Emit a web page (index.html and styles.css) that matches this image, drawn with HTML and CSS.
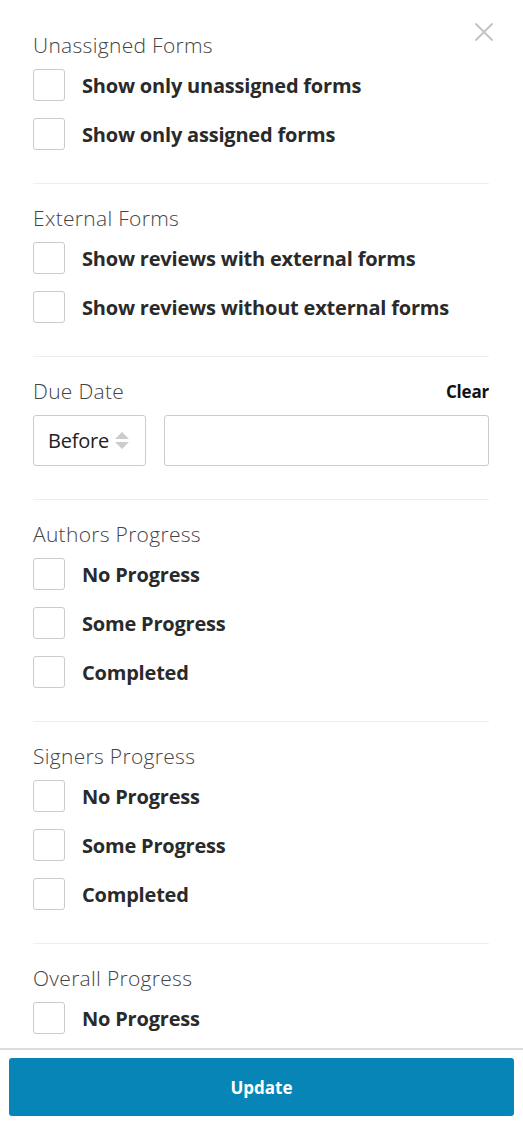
FILE: index.html
```html
<!DOCTYPE html>
<html>
<head>
<meta charset="utf-8">
<link rel="stylesheet" href="styles.css">
</head>
<body>
<div class="panel">
  <div class="scroll">
    <button class="close" aria-label="Close">
      <svg width="20" height="20" viewBox="0 0 20 20"><path d="M1.5 1.5 L18.5 18.5 M18.5 1.5 L1.5 18.5" stroke="#c4c4c4" stroke-width="2" fill="none"/></svg>
    </button>

    <section class="group">
      <h3 class="title">Unassigned Forms</h3>
      <div class="rows">
        <label class="row"><span class="box"></span><span class="lbl">Show only unassigned forms</span></label>
        <label class="row"><span class="box"></span><span class="lbl">Show only assigned forms</span></label>
      </div>
    </section>

    <section class="group">
      <h3 class="title">External Forms</h3>
      <div class="rows">
        <label class="row"><span class="box"></span><span class="lbl">Show reviews with external forms</span></label>
        <label class="row"><span class="box"></span><span class="lbl">Show reviews without external forms</span></label>
      </div>
    </section>

    <section class="group">
      <div class="title-line">
        <h3 class="title">Due Date</h3>
        <span class="clear">Clear</span>
      </div>
      <div class="date-row">
        <div class="select">
          <span>Before</span>
          <svg class="arrows" width="14" height="17" viewBox="0 0 14 17"><path d="M7 0 L14 7 L0 7 Z" fill="#cccccc"/><path d="M0 10 L14 10 L7 17 Z" fill="#cccccc"/></svg>
        </div>
        <div class="input"></div>
      </div>
    </section>

    <section class="group">
      <h3 class="title">Authors Progress</h3>
      <div class="rows">
        <label class="row"><span class="box"></span><span class="lbl">No Progress</span></label>
        <label class="row"><span class="box"></span><span class="lbl">Some Progress</span></label>
        <label class="row"><span class="box"></span><span class="lbl">Completed</span></label>
      </div>
    </section>

    <section class="group">
      <h3 class="title">Signers Progress</h3>
      <div class="rows">
        <label class="row"><span class="box"></span><span class="lbl">No Progress</span></label>
        <label class="row"><span class="box"></span><span class="lbl">Some Progress</span></label>
        <label class="row"><span class="box"></span><span class="lbl">Completed</span></label>
      </div>
    </section>

    <section class="group last">
      <h3 class="title">Overall Progress</h3>
      <div class="rows">
        <label class="row"><span class="box"></span><span class="lbl">No Progress</span></label>
      </div>
    </section>
  </div>
  <div class="footer">
    <button class="update">Update</button>
  </div>
</div>
</body>
</html>
```

FILE: styles.css
```css
* { box-sizing: border-box; }
html, body {
  margin: 0;
  padding: 0;
  background: #ffffff;
}
body {
  font-family: "Open Sans", Lato, "Liberation Sans", sans-serif;
  color: #333333;
}
.panel {
  width: 523px;
  height: 1125px;
  display: flex;
  flex-direction: column;
  overflow: hidden;
}
.scroll {
  flex: 1;
  overflow: hidden;
  position: relative;
  padding: 11px 34px 0 33px;
}
.close {
  position: absolute;
  top: 22px;
  right: 29px;
  width: 20px;
  height: 20px;
  padding: 0;
  border: none;
  background: none;
  display: block;
}
.close svg { display: block; }
.group {
  padding: 21px 0 33px 0;
  border-bottom: 1px solid #eeeeee;
}
.group.last {
  border-bottom: none;
  padding-bottom: 0;
}
.title {
  margin: 0;
  font-size: 21px;
  line-height: 26px;
  font-weight: 300;
  letter-spacing: 0.3px;
  color: #444444;
}
.title-line {
  display: flex;
  justify-content: space-between;
  align-items: center;
}
.clear {
  font-size: 17px;
  font-weight: 700;
  color: #111111;
  letter-spacing: -0.2px;
}
.rows {
  display: flex;
  flex-direction: column;
  gap: 17px;
  margin-top: 11px;
}
.row {
  display: flex;
  align-items: center;
  gap: 17px;
  height: 32px;
}
.box {
  width: 32px;
  height: 32px;
  border: 1px solid #cccccc;
  border-radius: 3px;
  flex: none;
}
.lbl {
  font-size: 20px;
  font-weight: 700;
  color: #2a2a2a;
  letter-spacing: -0.2px;
}
.date-row {
  display: flex;
  gap: 18px;
  margin-top: 11px;
}
.select {
  width: 113px;
  height: 51px;
  border: 1px solid #cccccc;
  border-radius: 3px;
  display: flex;
  align-items: center;
  padding-left: 14px;
  gap: 6px;
  font-size: 20px;
  letter-spacing: -0.2px;
  color: #222222;
}
.arrows { display: block; }
.input {
  flex: 1;
  height: 51px;
  border: 1px solid #cccccc;
  border-radius: 3px;
}
.footer {
  flex: none;
  border-top: 2px solid #dddddd;
  padding: 8px 9px 9px 9px;
}
.update {
  display: block;
  width: 100%;
  height: 58px;
  border: none;
  border-radius: 3px;
  background: #0785b6;
  color: #ffffff;
  font-family: inherit;
  font-size: 17px;
  font-weight: 700;
}
```
